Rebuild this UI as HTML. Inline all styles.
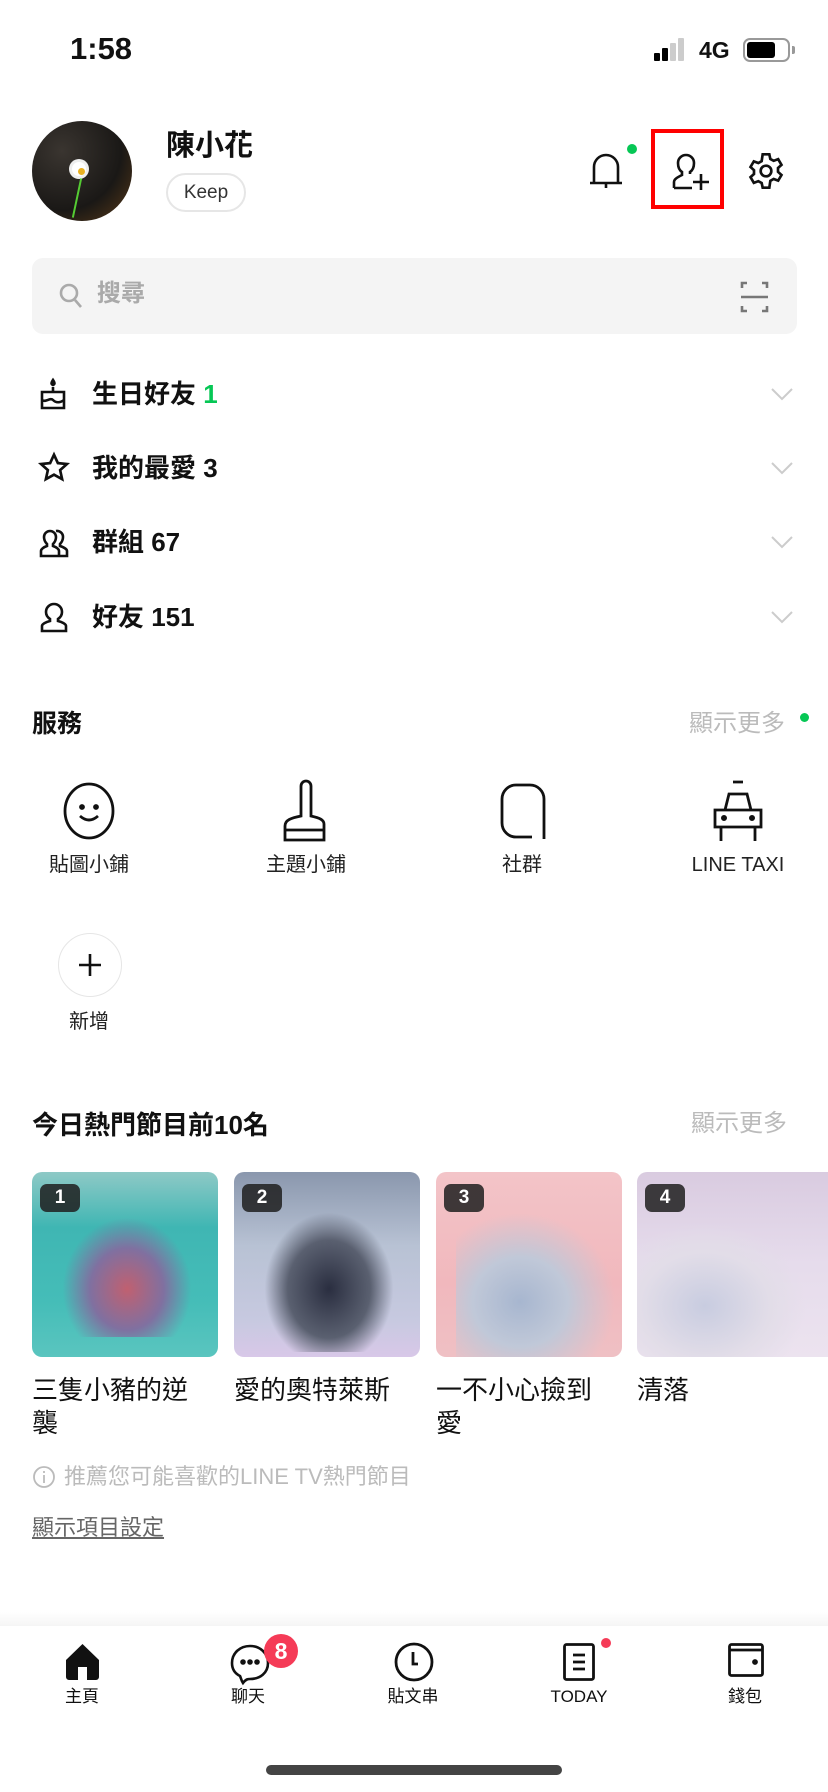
<!DOCTYPE html>
<html><head><meta charset="utf-8"><style>
*{margin:0;padding:0;box-sizing:border-box}
body{width:828px;height:1792px;background:#fff;position:relative;overflow:hidden;font-family:"Liberation Sans","Noto Sans CJK TC",sans-serif;color:#111}
.a{position:absolute}
.t{position:absolute;white-space:nowrap;line-height:1}
svg{position:absolute;overflow:visible}
.row{font-size:26px;font-weight:bold}
.svc{font-size:20px;color:#222;text-align:center;width:200px}
.thumb{position:absolute;top:1172px;width:186px;height:185px;border-radius:10px;overflow:hidden}
.badge{position:absolute;left:8px;top:12px;width:40px;height:28px;border-radius:7px;background:rgba(30,30,30,.85);color:#fff;font-size:19px;font-weight:bold;text-align:center;line-height:28px}
.ttl{font-size:26px;line-height:33px;color:#111;width:168px;top:1374px;position:absolute;white-space:normal}
.tab{font-size:17px;text-align:center;width:120px;top:1688px}
</style></head><body>
<!-- status -->
<div class="t" style="left:70px;top:33px;font-size:31px;font-weight:bold">1:58</div>
<div class="a" style="left:654px;top:53px;width:6px;height:8px;background:#000;border-radius:1px"></div>
<div class="a" style="left:662px;top:48px;width:6px;height:13px;background:#000;border-radius:1px"></div>
<div class="a" style="left:670px;top:43px;width:6px;height:18px;background:#ccc;border-radius:1px"></div>
<div class="a" style="left:678px;top:38px;width:6px;height:23px;background:#ccc;border-radius:1px"></div>
<div class="t" style="left:699px;top:39px;font-size:23px;font-weight:bold">4G</div>
<div class="a" style="left:743px;top:38px;width:47px;height:24px;border:2px solid #999;border-radius:7px"></div>
<div class="a" style="left:747px;top:42px;width:28px;height:16px;background:#000;border-radius:3px"></div>
<div class="a" style="left:792px;top:46px;width:3px;height:8px;background:#999;border-radius:0 2px 2px 0"></div>
<!-- profile -->
<div class="a" style="left:32px;top:121px;width:100px;height:100px;border-radius:50%;background:radial-gradient(circle at 30% 30%,#3a3530,#1a1816 60%,#5a3a18)"></div>
<div class="a" style="left:72px;top:162px;width:14px;height:14px;border-radius:50%;background:#fff;box-shadow:0 0 0 3px #eee"></div>
<div class="a" style="left:78px;top:168px;width:7px;height:7px;border-radius:50%;background:#e8b020"></div>
<div class="a" style="left:76px;top:178px;width:2px;height:40px;background:#5c3;transform:rotate(12deg)"></div>
<div class="t" style="left:166px;top:132px;font-size:29px;font-weight:bold">陳小花</div>
<div class="a" style="left:166px;top:173px;width:80px;height:39px;border:2px solid #e6e6e6;border-radius:20px;font-size:19px;line-height:35px;text-align:center;color:#333">Keep</div>
<!-- bell -->
<svg style="left:588px;top:150px" width="36" height="42" viewBox="0 0 36 42" fill="none" stroke="#111" stroke-width="2.6"><path d="M6 33V17a12 12 0 0 1 24 0v16zM2 33h32M18 33v5"/></svg>
<div class="a" style="left:627px;top:144px;width:10px;height:10px;border-radius:50%;background:#06c755"></div>
<div class="a" style="left:651px;top:129px;width:73px;height:80px;border:4px solid #f00"></div>
<svg style="left:670px;top:150px" width="40" height="42" viewBox="0 0 40 42" fill="none" stroke="#111" stroke-width="2.6"><path d="M4 38v-6c0-3 4-5 8-7v-3c-3-2-4-5-4-9a8 8 0 0 1 16 0c0 4-1 7-4 9v2"/><path d="M4 38h18M31 24v16M23 32h16"/></svg>
<svg style="left:746px;top:151px" width="40" height="40" viewBox="0 0 24 24" fill="none" stroke="#111" stroke-width="1.6"><path d="M10 2h4l.6 2.8 2 1.1 2.7-1 2 3.4-2.1 1.9v2.3l2.1 1.9-2 3.4-2.7-1-2 1.1L14 22h-4l-.6-2.8-2-1.1-2.7 1-2-3.4 2.1-1.9V11.5L2.7 9.6l2-3.4 2.7 1 2-1.1z"/><circle cx="12" cy="12" r="3.2"/></svg>
<!-- search -->
<div class="a" style="left:32px;top:258px;width:765px;height:76px;background:#f4f4f4;border-radius:11px"></div>
<svg style="left:59px;top:283px" width="24" height="26" viewBox="0 0 24 26" fill="none" stroke="#aaa" stroke-width="2.6"><circle cx="10" cy="10" r="8"/><path d="M16 17l6 7"/></svg>
<div class="t" style="left:97px;top:282px;font-size:24px;color:#aaa;font-weight:bold">搜尋</div>
<svg style="left:741px;top:282px" width="27" height="30" viewBox="0 0 27 30" fill="none" stroke="#777" stroke-width="2.6"><path d="M1 6V1h5M21 1h5v5M1 24v5h5M21 29h5v-5M0 15h27"/></svg>
<!-- list -->
<svg style="left:40px;top:378px" width="26" height="32" viewBox="0 0 26 32" fill="none" stroke="#111" stroke-width="2.6"><path d="M2 14h22v16H2zM2 22c4 3 8-3 11 0s7 3 11 0M13 14V9"/><path d="M13 2c-2 3-2 4 0 5 2-1 2-2 0-5z" fill="#111"/></svg>
<div class="t row" style="left:92px;top:381px">生日好友 <span style="color:#06c755">1</span></div>
<svg style="left:38px;top:452px" width="32" height="32" viewBox="0 0 24 24" fill="none" stroke="#111" stroke-width="2"><path d="M12 2l2.9 6.3 6.8.7-5.1 4.6 1.5 6.8L12 17l-6.1 3.4 1.5-6.8L2.3 9l6.8-.7z"/></svg>
<div class="t row" style="left:92px;top:455px">我的最愛 3</div>
<svg style="left:38px;top:526px" width="32" height="32" viewBox="0 0 32 32" fill="none" stroke="#111" stroke-width="2.6"><path d="M3 30v-5c0-2 3-4 6-5v-2c-2-2-3-4-3-7a6 6 0 0 1 12 0c0 3-1 5-3 7v2c3 1 6 3 6 5v5zM18 5a6 6 0 0 1 7 6c0 3-1 5-3 7v2c3 1 7 3 7 5v5h-7"/></svg>
<div class="t row" style="left:92px;top:529px">群組 67</div>
<svg style="left:40px;top:601px" width="28" height="32" viewBox="0 0 28 32" fill="none" stroke="#111" stroke-width="2.6"><path d="M2 30v-5c0-2 4-4 8-5v-2c-3-2-4-4-4-7a8 8 0 0 1 16 0c0 3-1 5-4 7v2c4 1 8 3 8 5v5z"/></svg>
<div class="t row" style="left:92px;top:604px">好友 151</div>
<svg style="left:771px;top:388px" width="22" height="12" viewBox="0 0 22 12" fill="none" stroke="#ccc" stroke-width="2"><path d="M1 1l10 10 10-10"/></svg>
<svg style="left:771px;top:462px" width="22" height="12" viewBox="0 0 22 12" fill="none" stroke="#ccc" stroke-width="2"><path d="M1 1l10 10 10-10"/></svg>
<svg style="left:771px;top:536px" width="22" height="12" viewBox="0 0 22 12" fill="none" stroke="#ccc" stroke-width="2"><path d="M1 1l10 10 10-10"/></svg>
<svg style="left:771px;top:611px" width="22" height="12" viewBox="0 0 22 12" fill="none" stroke="#ccc" stroke-width="2"><path d="M1 1l10 10 10-10"/></svg>
<!-- services -->
<div class="t" style="left:32px;top:712px;font-size:25px;font-weight:bold">服務</div>
<div class="t" style="left:689px;top:712px;font-size:24px;color:#bbb">顯示更多</div>
<div class="a" style="left:800px;top:713px;width:9px;height:9px;border-radius:50%;background:#06c755"></div>
<svg style="left:63px;top:782px" width="52" height="58" viewBox="0 0 52 58" fill="none" stroke="#111" stroke-width="2.8"><ellipse cx="26" cy="29" rx="24" ry="27"/><circle cx="19" cy="25" r="1.5" fill="#111"/><circle cx="33" cy="25" r="1.5" fill="#111"/><path d="M17 34q9 8 18 0"/></svg>
<svg style="left:282px;top:780px" width="48" height="62" viewBox="0 0 48 62" fill="none" stroke="#111" stroke-width="2.8"><path d="M19 36V6a5 5 0 0 1 10 0v30c9 2 13 4 13 8v16H3V46c0-6 6-8 16-10zM3 50h39"/></svg>
<svg style="left:500px;top:783px" width="46" height="56" viewBox="0 0 46 56" fill="none" stroke="#111" stroke-width="2.8"><path d="M44 56V16A14 14 0 0 0 30 2H16A14 14 0 0 0 2 16v24a14 14 0 0 0 14 14h16"/></svg>
<svg style="left:712px;top:780px" width="52" height="62" viewBox="0 0 52 62" fill="none" stroke="#111" stroke-width="2.8"><path d="M21 2h10M13 30l4-16h18l4 16M3 30h46v17H3zM9 47v14M43 47v14"/><circle cx="12" cy="38" r="1.6" fill="#111"/><circle cx="40" cy="38" r="1.6" fill="#111"/></svg>
<div class="t svc" style="left:-11px;top:855px">貼圖小鋪</div>
<div class="t svc" style="left:206px;top:855px">主題小鋪</div>
<div class="t svc" style="left:422px;top:855px">社群</div>
<div class="t svc" style="left:638px;top:855px">LINE TAXI</div>
<div class="a" style="left:58px;top:933px;width:64px;height:64px;border-radius:50%;border:1.5px solid #e6e6e6"></div>
<svg style="left:79px;top:954px" width="22" height="22" viewBox="0 0 22 22" stroke="#111" stroke-width="2.6"><path d="M11 0v22M0 11h22"/></svg>
<div class="t svc" style="left:-11px;top:1012px">新增</div>
<!-- ranking -->
<div class="t" style="left:32px;top:1112px;font-size:26px;font-weight:bold">今日熱門節目前10名</div>
<div class="t" style="left:691px;top:1112px;font-size:24px;color:#bbb">顯示更多</div>
<div class="thumb" style="left:32px;background:linear-gradient(180deg,#8ec9c6 0%,#3fb6b3 30%,#45bdb8 70%,#5ac5bf 100%)">
 <div class="a" style="left:30px;top:45px;width:130px;height:120px;background:radial-gradient(ellipse at 50% 60%,#c06070 0%,#8070a0 40%,transparent 70%)"></div>
 <div class="badge">1</div></div>
<div class="thumb" style="left:234px;background:linear-gradient(180deg,#8a97ad 0%,#b8c2d4 40%,#c7c9e0 80%,#d8c8e8 100%)">
 <div class="a" style="left:30px;top:40px;width:130px;height:140px;background:radial-gradient(ellipse at 50% 55%,#2a2e40 0%,#5a6070 45%,transparent 70%)"></div>
 <div class="badge">2</div></div>
<div class="thumb" style="left:436px;background:linear-gradient(180deg,#f3c4c8 0%,#f1b8bd 60%,#efc0c4 100%)">
 <div class="a" style="left:20px;top:40px;width:160px;height:150px;background:radial-gradient(ellipse at 40% 60%,#a7b6cf 0%,#c0c8d8 35%,transparent 70%)"></div>
 <div class="badge">3</div></div>
<div class="thumb" style="left:637px;width:191px;border-radius:10px 0 0 10px;background:linear-gradient(180deg,#d9cbe0 0%,#e6dcec 50%,#ece3ef 100%)">
 <div class="a" style="left:0;top:50px;width:170px;height:140px;background:radial-gradient(ellipse at 40% 60%,#c8cce0 0%,#e2dde8 45%,transparent 70%)"></div>
 <div class="badge">4</div></div>
<div class="ttl" style="left:32px">三隻小豬的逆襲</div>
<div class="ttl" style="left:234px;width:186px">愛的奧特萊斯</div>
<div class="ttl" style="left:436px">一不小心撿到愛</div>
<div class="ttl" style="left:637px">清落</div>
<svg style="left:33px;top:1466px" width="22" height="22" viewBox="0 0 22 22" fill="none" stroke="#bbb" stroke-width="1.8"><circle cx="11" cy="11" r="10"/><path d="M11 9v8M11 5v2"/></svg>
<div class="t" style="left:64px;top:1466px;font-size:22px;color:#bbb">推薦您可能喜歡的LINE TV熱門節目</div>
<div class="t" style="left:32px;top:1517px;font-size:22px;color:#666;text-decoration:underline">顯示項目設定</div>
<!-- tab bar -->
<div class="a" style="left:0;top:1612px;width:828px;height:14px;background:linear-gradient(#fff,#f5f5f5)"></div>
<svg style="left:65px;top:1643px" width="35" height="37" viewBox="0 0 35 37"><path d="M17.5 1L34 17v17a3 3 0 0 1-3 3h-9V24h-9v13H4a3 3 0 0 1-3-3V17z" fill="#111"/></svg>
<svg style="left:230px;top:1641px" width="40" height="44" viewBox="0 0 40 44" fill="none" stroke="#111" stroke-width="2.6"><path d="M13 42c-2-3-2-5-3-7C4 32 2 27 2 22 2 12 10 5 20 5s18 7 18 17-8 16-18 16c-2 0-4 0-7 4z"/><circle cx="13" cy="21" r="1.5" fill="#111"/><circle cx="20" cy="21" r="1.5" fill="#111"/><circle cx="27" cy="21" r="1.5" fill="#111"/></svg>
<div class="a" style="left:264px;top:1634px;width:34px;height:34px;border-radius:50%;background:#f53b57;color:#fff;font-size:23px;font-weight:bold;text-align:center;line-height:34px">8</div>
<svg style="left:394px;top:1642px" width="40" height="40" viewBox="0 0 40 40" fill="none" stroke="#111" stroke-width="2.8"><circle cx="20" cy="20" r="18"/><path d="M19 10v12h5"/></svg>
<svg style="left:563px;top:1643px" width="32" height="38" viewBox="0 0 32 38" fill="none" stroke="#111" stroke-width="2.8"><rect x="1.5" y="1.5" width="29" height="35" rx="2"/><path d="M10 12h12M10 19h12M10 26h12"/></svg>
<div class="a" style="left:601px;top:1638px;width:10px;height:10px;border-radius:50%;background:#f53b57"></div>
<svg style="left:728px;top:1643px" width="36" height="34" viewBox="0 0 36 34" fill="none" stroke="#111" stroke-width="2.8"><rect x="1.5" y="1.5" width="33" height="31" rx="2"/><path d="M1.5 7h33"/><circle cx="27" cy="19" r="1.5" fill="#111"/></svg>
<div class="t tab" style="left:22px">主頁</div>
<div class="t tab" style="left:188px">聊天</div>
<div class="t tab" style="left:353px">貼文串</div>
<div class="t tab" style="left:519px">TODAY</div>
<div class="t tab" style="left:685px">錢包</div>
<div class="a" style="left:266px;top:1765px;width:296px;height:10px;border-radius:5px;background:#444"></div>
</body></html>
